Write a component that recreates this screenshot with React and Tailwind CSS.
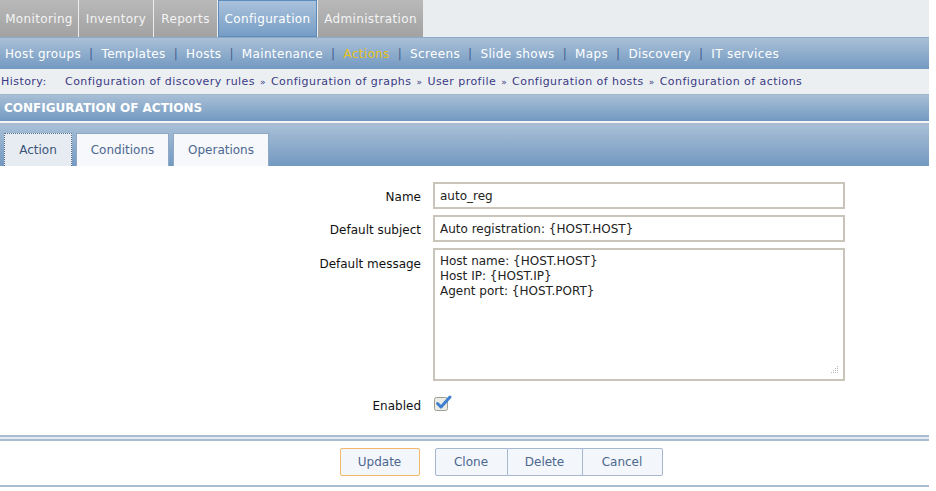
import React from "react"

const mainTabs = [
  { t: "Monitoring", w: "w-[78px]" },
  { t: "Inventory", w: "w-[74px]" },
  { t: "Reports", w: "w-[63px]" },
  { t: "Configuration", w: "w-[99px]" },
  { t: "Administration", w: "w-[105px]" },
]
const subMenu = ["Host groups", "Templates", "Hosts", "Maintenance", "Actions", "Screens", "Slide shows", "Maps", "Discovery", "IT services"]
const history = [
  "Configuration of discovery rules",
  "Configuration of graphs",
  "User profile",
  "Configuration of hosts",
  "Configuration of actions",
]

function CheckIcon() {
  return (
    <svg width="20" height="18" viewBox="0 0 20 18">
      <rect x="1.5" y="3.5" width="13" height="13" rx="2" fill="#ecece6" stroke="#9e9e94" />
      <path d="M4.5 9.5 L8 13 L17 3" fill="none" stroke="#3f7fd0" strokeWidth="3" strokeLinecap="round" strokeLinejoin="round" />
    </svg>
  )
}

function Field({ label, children, top }) {
  return (
    <div className={`flex gap-3 ${top ? "items-start" : "items-center"}`}>
      <div className={`w-[421px] text-right text-[12px] text-[#111] ${top ? "pt-[7px]" : "pt-[2px]"}`}>{label}</div>
      {children}
    </div>
  )
}

export default function App() {
  return (
    <div className="w-[936px] h-[491px] bg-white overflow-hidden font-['DejaVu_Sans',sans-serif]">
      <div className="w-[929px]">
        {/* top menu */}
        <div className="flex gap-px h-[37px] bg-[#eaedf0]">
          {mainTabs.map(({ t, w }) =>
            t === "Configuration" ? (
              <div
                key={t}
                className={`flex items-center justify-center ${w} border border-[#5e8cba] bg-gradient-to-b from-[#a9c2dc] to-[#779dc5] text-[12px] tracking-[0.35px] text-white`}
              >
                {t}
              </div>
            ) : (
              <div
                key={t}
                className={`flex items-center justify-center ${w} bg-gradient-to-b from-[#b9b9b9] to-[#a2a2a2] text-[12px] tracking-[0.35px] text-[#f4f4f4]`}
              >
                {t}
              </div>
            )
          )}
        </div>

        {/* sub menu */}
        <div className="flex items-center h-[32px] px-[5px] border-t border-[#8eaacb] bg-gradient-to-b from-[#a9c0d7] to-[#7399c1] text-[12px] tracking-[0.35px]">
          {subMenu.map((s, i) => (
            <React.Fragment key={s}>
              {i > 0 && <span className="mx-[8px] text-[#44618f]">|</span>}
              <span className={s === "Actions" ? "text-[#e8c21c]" : "text-white"}>{s}</span>
            </React.Fragment>
          ))}
        </div>

        {/* history */}
        <div className="flex items-center h-[25px] px-[1px] pt-[2px] bg-[#eceff2] text-[11px] tracking-[0.45px] text-[#3a3a84]">
          <span className="w-[64px]">History:</span>
          {history.map((h, i) => (
            <React.Fragment key={h}>
              {i > 0 && <span className="mx-[5px] text-[9px]">»</span>}
              <span>{h}</span>
            </React.Fragment>
          ))}
        </div>

        {/* header */}
        <div className="flex items-center h-[27px] px-[4px] border-t border-[#9fb5cd] bg-gradient-to-b from-[#a8bfd6] to-[#7399c1] text-[12px] font-bold text-white">
          CONFIGURATION OF ACTIONS
        </div>
        <div className="h-[2px] bg-[#f2f4f6]" />
        <div className="h-[2px] bg-[#a9bad0]" />

        {/* tabs */}
        <div className="flex items-end gap-[4px] h-[41px] px-[4px] bg-gradient-to-b from-[#a8bfd6] to-[#7399c1]">
          <div className="flex items-center justify-center w-[68px] h-[33px] bg-[#e6ecf2] border border-dotted border-[#5a6f8c] border-b-0 text-[12px] text-[#3c5478]">
            Action
          </div>
          <div className="flex items-center justify-center w-[93px] h-[33px] bg-[#f6f8fb] border border-[#8fa8c6] border-b-0 text-[12px] text-[#4c6790]">
            Conditions
          </div>
          <div className="flex items-center justify-center w-[96px] h-[33px] bg-[#f6f8fb] border border-[#8fa8c6] border-b-0 text-[12px] text-[#4c6790]">
            Operations
          </div>
        </div>

        {/* form */}
        <div className="flex flex-col gap-[6px] pt-[16px] h-[269px]">
          <Field label="Name">
            <div className="flex items-center w-[412px] h-[27px] px-[5px] border-2 border-[#c9c5bb] text-[12px] text-[#222]">
              auto_reg
            </div>
          </Field>
          <Field label="Default subject">
            <div className="flex items-center w-[412px] h-[27px] px-[5px] border-2 border-[#c9c5bb] text-[12px] text-[#222]">
              Auto registration: {"{HOST.HOST}"}
            </div>
          </Field>
          <Field label="Default message" top>
            <div className="relative w-[412px] h-[133px] px-[5px] pt-[4px] border-2 border-[#c9c5bb] text-[12px] leading-[15px] text-[#222]">
              <div>Host name: {"{HOST.HOST}"}</div>
              <div>Host IP: {"{HOST.IP}"}</div>
              <div>Agent port: {"{HOST.PORT}"}</div>
              <svg className="absolute right-[3px] bottom-[3px]" width="12" height="12" viewBox="0 0 12 12">
                <g fill="#b8b8b8">
                  <rect x="9" y="2" width="1" height="1" />
                  <rect x="7" y="4" width="1" height="1" />
                  <rect x="9" y="4" width="1" height="1" />
                  <rect x="5" y="6" width="1" height="1" />
                  <rect x="7" y="6" width="1" height="1" />
                  <rect x="9" y="6" width="1" height="1" />
                  <rect x="3" y="8" width="1" height="1" />
                  <rect x="5" y="8" width="1" height="1" />
                  <rect x="7" y="8" width="1" height="1" />
                  <rect x="9" y="8" width="1" height="1" />
                </g>
              </svg>
            </div>
          </Field>
          <div className="flex items-center gap-3 mt-[4px]">
            <div className="w-[421px] text-right text-[12px] text-[#111] pt-[6px]">Enabled</div>
            <CheckIcon />
          </div>
        </div>

        {/* footer */}
        <div className="h-[2px] bg-[#a9bcd2]" />
        <div className="h-[2px] bg-[#e4eaf1]" />
        <div className="h-[2px] bg-[#a9bcd2]" />
        <div className="flex justify-center gap-[15px] pt-[7px] h-[44px] pl-[73px]">
          <button className="w-[80px] h-[28px] bg-[#f3f6fa] border border-[#f5b86a] rounded-[2px] text-[12px] text-[#4c6790]">
            Update
          </button>
          <div className="flex">
            <button className="w-[73px] h-[28px] bg-[#f3f6fa] border border-[#a6b8cf] rounded-l-[2px] text-[12px] text-[#4c6790]">
              Clone
            </button>
            <button className="w-[75px] h-[28px] bg-[#f3f6fa] border border-l-0 border-[#a6b8cf] text-[12px] text-[#4c6790]">
              Delete
            </button>
            <button className="w-[80px] h-[28px] bg-[#f3f6fa] border border-l-0 border-[#a6b8cf] rounded-r-[2px] text-[12px] text-[#4c6790]">
              Cancel
            </button>
          </div>
        </div>
        <div className="h-[2px] bg-[#a9bcd2]" />
      </div>
    </div>
  )
}
